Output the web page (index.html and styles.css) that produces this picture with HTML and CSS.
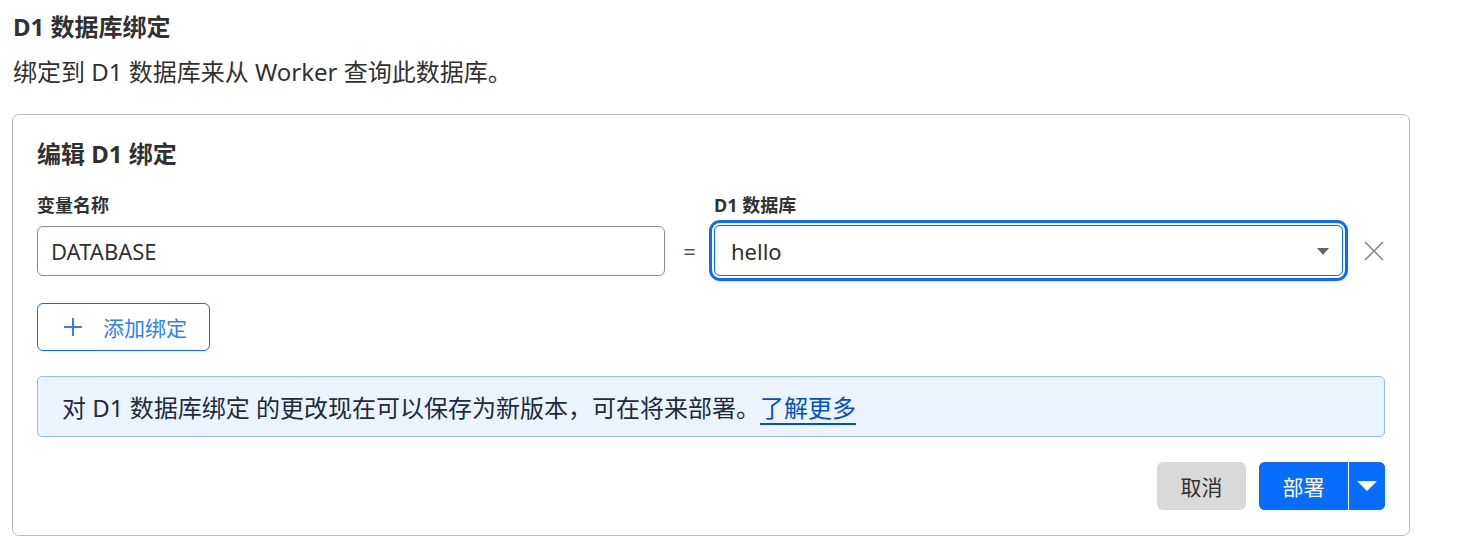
FILE: index.html
```html
<!DOCTYPE html>
<html lang="zh-CN">
<head>
<meta charset="utf-8">
<title>D1 数据库绑定</title>
<link rel="stylesheet" href="styles.css">
</head>
<body>
<div class="page">
  <h2 class="title">D1 数据库绑定</h2>
  <p class="subtitle">绑定到 D1 数据库来从 Worker 查询此数据库。</p>
  <section class="card">
    <h3 class="card-title">编辑 D1 绑定</h3>
    <div class="binding-grid">
      <label class="field-label">变量名称</label>
      <span></span>
      <label class="field-label">D1 数据库</label>
      <span></span>
      <div class="text-input">DATABASE</div>
      <div class="equals">=</div>
      <div class="select focused">
        <span>hello</span>
        <svg class="select-arrow" width="12" height="7" viewBox="0 0 12 7"><path d="M0 0h12L6 7z" fill="#666"/></svg>
      </div>
      <button class="remove" aria-label="删除">
        <svg width="20" height="20" viewBox="0 0 20 20"><path d="M1 1L19 19M19 1L1 19" stroke="#8a8a8a" stroke-width="1.6" fill="none"/></svg>
      </button>
    </div>
    <button class="add-btn">
      <svg width="20" height="20" viewBox="0 0 20 20"><path d="M10 1v18M1 10h18" stroke="#2f80f5" stroke-width="2" fill="none"/></svg>
      <span>添加绑定</span>
    </button>
    <div class="info">对 D1 数据库绑定 的更改现在可以保存为新版本，可在将来部署。<a href="#" class="link">了解更多</a></div>
    <div class="actions">
      <button class="cancel">取消</button>
      <div class="split">
        <button class="deploy">部署</button>
        <button class="caret" aria-label="更多">
          <svg width="20" height="10" viewBox="0 0 20 10"><path d="M0 0h20L10 10z" fill="#fff"/></svg>
        </button>
      </div>
    </div>
  </section>
</div>
</body>
</html>
```

FILE: styles.css
```css
* { box-sizing: border-box; }
html, body { margin: 0; background: #fff; }
body {
  font-family: "Noto Sans", "Noto Sans CJK SC", sans-serif;
  color: #313131;
}
.page { padding: 11px 52px 0 13px; }
.title {
  margin: 0;
  font-size: 24px;
  line-height: 32px;
  font-weight: 700;
}
.subtitle {
  margin: 13px 0 0;
  font-size: 24px;
  line-height: 32px;
}
.card {
  margin: 26px 0 0 -1px;
  border: 1px solid #bdbdbd;
  border-radius: 7px;
  padding: 23px 24px 25px 24px;
  width: 1398px;
}
.card-title {
  margin: 0;
  font-size: 24px;
  line-height: 32px;
  font-weight: 700;
}
.binding-grid {
  margin-top: 23px;
  display: grid;
  grid-template-columns: 628px 49px 629px 41px;
  row-gap: 8px;
  align-items: center;
}
.field-label {
  font-size: 18px;
  line-height: 24px;
  font-weight: 700;
}
.text-input {
  height: 50px;
  border: 1px solid #8c8c8c;
  border-radius: 6px;
  padding: 0 13px;
  display: flex;
  align-items: center;
  font-size: 22px;
}
.equals {
  text-align: center;
  font-size: 22px;
  color: #555;
}
.select {
  height: 51px;
  border: 1px solid #0a6cff;
  border-radius: 6px;
  padding: 0 13px 0 16px;
  display: flex;
  align-items: center;
  justify-content: space-between;
  font-size: 22px;
}
.select.focused {
  box-shadow: 0 0 0 2px #fff, 0 0 0 5px #0a6cff;
}
.select-arrow { margin-top: 1px; }
.remove {
  justify-self: end;
  border: 0;
  background: none;
  padding: 0;
  width: 20px;
  height: 20px;
  display: flex;
}
.add-btn {
  margin-top: 27px;
  height: 48px;
  width: 173px;
  border: 1.5px solid #0a6cff;
  border-radius: 6px;
  background: #fff;
  color: #2f80f5;
  font-family: inherit;
  font-size: 21px;
  display: flex;
  align-items: center;
  padding: 0 0 0 25px;
  gap: 20px;
}
.info {
  margin-top: 25px;
  height: 61px;
  border: 1px solid #93bdf6;
  border-radius: 5px;
  background: #ebf3fe;
  padding: 0 24px;
  display: flex;
  align-items: center;
  font-size: 24px;
  color: #1f2a3d;
}
.link {
  color: #0051c3;
  text-decoration: underline;
  text-underline-offset: 6px;
  text-decoration-thickness: 2px;
}
.actions {
  margin-top: 25px;
  display: flex;
  justify-content: flex-end;
  gap: 13px;
}
.cancel {
  height: 48px;
  width: 89px;
  border: 0;
  border-radius: 6px;
  background: #d9d9d9;
  color: #313131;
  font-family: inherit;
  font-size: 21px;
}
.split {
  display: flex;
  height: 48px;
  border-radius: 6px;
  overflow: hidden;
  background: #086dff;
}
.deploy {
  width: 90px;
  border: 0;
  background: #086dff;
  color: #fff;
  font-family: inherit;
  font-size: 21px;
  border-right: 1px solid #fff;
}
.caret {
  width: 36px;
  border: 0;
  background: #086dff;
  display: flex;
  align-items: center;
  justify-content: center;
  padding: 0;
}
```
